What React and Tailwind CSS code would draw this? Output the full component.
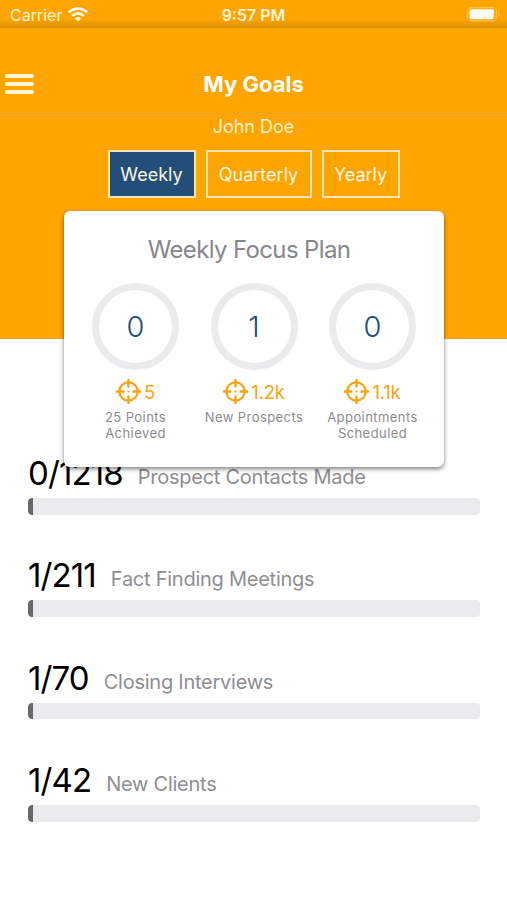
import React, { useState } from "react";

const periods = [
  { name: "Weekly", width: "w-[88px]" },
  { name: "Quarterly", width: "w-[106px]" },
  { name: "Yearly", width: "w-[78px]" },
];

const focusItems = [
  { value: 0, target: "5", lines: ["25 Points", "Achieved"] },
  { value: 1, target: "1.2k", lines: ["New Prospects"] },
  { value: 0, target: "1.1k", lines: ["Appointments", "Scheduled"] },
];

const goals = [
  { done: 0, total: 1218, label: "Prospect Contacts Made" },
  { done: 1, total: 211, label: "Fact Finding Meetings" },
  { done: 1, total: 70, label: "Closing Interviews" },
  { done: 1, total: 42, label: "New Clients" },
];

const WifiIcon = () => (
  <svg width="20" height="15" viewBox="0 0 20 15" fill="none" stroke="#fffaf0">
    <path d="M1 5.2a13 13 0 0 1 18 0" strokeWidth="2.7" />
    <path d="M4.2 8.8a8.2 8.2 0 0 1 11.6 0" strokeWidth="2.6" />
    <path d="M10 14.4 6.9 11.4a4.4 4.4 0 0 1 6.2 0Z" fill="#fffaf0" stroke="none" />
  </svg>
);

const BatteryIcon = () => (
  <svg width="33" height="15" viewBox="0 0 33 15" fill="none">
    <rect x="0.6" y="0.6" width="28.8" height="13.3" rx="4" stroke="#ffc04d" strokeWidth="1.1" />
    <rect x="2.6" y="2.3" width="24.4" height="10" rx="2.2" fill="#fff" />
    <path d="M31 5.3v4c1.4-.6 1.4-3.4 0-4Z" fill="#ffc04d" />
  </svg>
);

const TargetIcon = () => (
  <svg width="25" height="25" viewBox="0 0 25 25" fill="none" stroke="#fca311">
    <circle cx="12.5" cy="12.5" r="9.2" strokeWidth="2.3" />
    <path d="M12.5 0v8.5M12.5 16.5v8.5M0 12.5h8.5M16.5 12.5h8.5" strokeWidth="2.3" />
    <circle cx="12.5" cy="12.5" r="1.1" fill="#fca311" stroke="none" />
  </svg>
);

const StatusBar = () => (
  <div className="h-7 grid grid-cols-3 items-center pl-[10px] pr-[7px] text-[#fff3d6] bg-[linear-gradient(to_bottom,#ffa500_66%,#dc9003_100%)]">
    <div className="flex items-center gap-[6px] pt-px text-[16px]">
      Carrier <WifiIcon />
    </div>
    <div className="pt-px pr-[3px] text-center text-[16px] font-semibold">9:57 PM</div>
    <div className="flex justify-end">
      <BatteryIcon />
    </div>
  </div>
);

const FocusItem = ({ item }) => (
  <div className="w-[118.5px] flex flex-col items-center">
    <div className="w-[87px] h-[87px] rounded-full border-[7px] border-[#e9ebec] flex items-center justify-center text-[29px] font-light text-[#244d7c]">
      {item.value}
    </div>
    <div className="mt-[9px] h-[25px] flex items-center gap-[3px] text-[18.5px] text-[#fca311]">
      <TargetIcon />
      <span className="pt-[3px] tracking-[-0.2px]">{item.target}</span>
    </div>
    <div className="mt-[6px] text-center text-[13px] leading-[15.5px] tracking-[0.43px] text-[#8b8b8d]">
      {item.lines.map((line) => (
        <p key={line}>{line}</p>
      ))}
    </div>
  </div>
);

const GoalRow = ({ goal }) => {
  // small totals still show the same sliver until real progress is made
  const percent = Math.max(1.1, Math.floor((goal.done / goal.total) * 10) * 10);

  return (
    <div className="h-[102.4px]">
      <div className="h-[42px] flex items-baseline gap-[15px] leading-[42px] whitespace-nowrap">
        <span className="text-[33px] tracking-[-0.9px] text-black">
          {goal.done}/{goal.total}
        </span>
        <span className="relative -top-px text-[20px] tracking-[-0.25px] text-[#8e8e92]">
          {goal.label}
        </span>
      </div>
      <div className="mt-1 h-[16.5px] rounded bg-[#e9ebec] overflow-hidden">
        <div className="h-full rounded-l bg-[#686868]" style={{ width: `${percent}%` }} />
      </div>
    </div>
  );
};

const App = () => {
  const [period, setPeriod] = useState("Weekly");

  return (
    <div className="w-[507px] h-[900px] overflow-hidden bg-white font-['Inter',sans-serif]">
      <StatusBar />

      <header className="h-[86px] grid grid-cols-3 items-center pt-[27px] px-[5px] bg-[#ffa500] border-b border-[#e9a62c]">
        <button className="w-[29px] flex flex-col gap-1" aria-label="Menu">
          <span className="h-1 w-full rounded-sm bg-[#fff3d6]" />
          <span className="h-1 w-full rounded-sm bg-[#fff3d6]" />
          <span className="h-1 w-full rounded-sm bg-[#fff3d6]" />
        </button>
        <h1 className="text-center text-[22px] font-bold text-white">My Goals</h1>
      </header>

      <section className="h-[225px] bg-[#ffa500] flex flex-col items-center">
        <p className="h-6 leading-[25px] text-[18px] text-[#fff0cf]">John Doe</p>

        <div className="mt-3 flex gap-[10px]">
          {periods.map((p) => (
            <button
              key={p.name}
              onClick={() => setPeriod(p.name)}
              className={`h-12 border-2 border-[#ffe4b0] text-[18px] text-[#fff6e2] ${p.width} ${
                period === p.name ? "bg-[#234e78]" : ""
              }`}
            >
              {p.name}
            </button>
          ))}
        </div>

        <div className="relative z-10 mt-[13px] w-[380px] h-[256px] shrink-0 rounded-md bg-white shadow-[0_2px_4px_rgba(0,0,0,0.5)] flex flex-col items-center">
          <h2 className="mt-[23px] mr-[9px] h-8 leading-8 text-[24px] tracking-[-0.64px] text-[#85878a]">
            {period} Focus Plan
          </h2>
          <div className="mt-[17px] ml-px flex">
            {focusItems.map((item) => (
              <FocusItem key={item.lines[0]} item={item} />
            ))}
          </div>
        </div>
      </section>

      <section className="pt-[113px] pl-[28px] pr-[27px]">
        {goals.map((goal) => (
          <GoalRow key={goal.label} goal={goal} />
        ))}
      </section>
    </div>
  );
};

export default App;
